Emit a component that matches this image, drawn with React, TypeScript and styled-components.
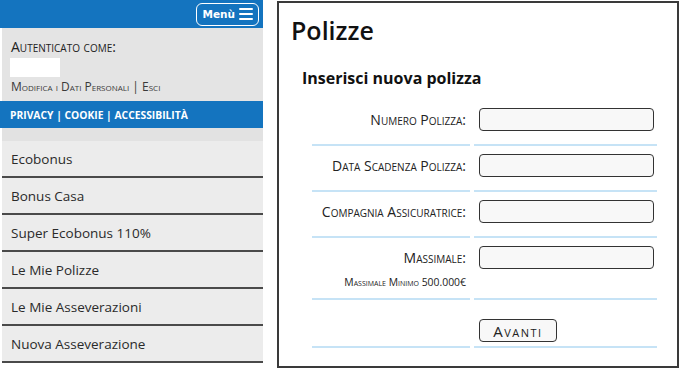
import { Fragment } from "react";
import styled, { createGlobalStyle } from "styled-components";

const GlobalStyle = createGlobalStyle`
  body {
    margin: 0;
    background: #ffffff;
    font-family: "Open Sans", "Liberation Sans", sans-serif;
    color: #222;
  }
`;

const blue = "#1474bf";
const rule = "#c6e3f6";

const Page = styled.div`
  display: flex;
  width: 680px;
  height: 375px;
  overflow: hidden;
`;

const Sidebar = styled.aside`
  width: 263px;
  flex: none;
  display: flex;
  flex-direction: column;
`;

const TopBar = styled.div`
  height: 28px;
  background: ${blue};
  display: flex;
  align-items: center;
  justify-content: flex-end;
  padding-right: 4px;
`;

const MenuButton = styled.button`
  display: flex;
  align-items: center;
  gap: 4px;
  height: 23px;
  padding: 0 5px 0 5px;
  border: 1.5px solid #fff;
  border-radius: 6px;
  background: transparent;
  color: #fff;
  font-family: "DejaVu Sans", sans-serif;
  font-weight: bold;
  font-size: 10.5px;
`;

const UserBox = styled.div`
  background: #e4e4e4;
  margin-left: 2px;
  padding: 10px 0 6px 9px;
`;

const SmallCaps = styled.div<{ $size: number }>`
  font-variant: small-caps;
  font-size: ${(p) => p.$size}px;
  line-height: ${(p) => p.$size + 4}px;
  color: #222;
`;

const NameBox = styled.div`
  width: 50px;
  height: 19px;
  background: #fff;
  margin: 2px 0 2px -1px;
`;

const LinkLine = styled(SmallCaps)`
  color: #3a3a3a;
`;

const PrivacyBar = styled.div`
  background: ${blue};
  height: 27px;
  display: flex;
  align-items: center;
  padding-left: 10px;
  color: #fff;
  font-weight: bold;
  font-size: 10.3px;
`;

const Spacer = styled.div`
  height: 13px;
  margin-left: 2px;
  background: #e2e2e2;
`;

const MenuList = styled.ul`
  list-style: none;
  margin: 0 0 0 2px;
  padding: 0;
`;

const MenuItem = styled.li`
  height: 35px;
  display: flex;
  align-items: center;
  padding-left: 9px;
  background: #ececec;
  border-bottom: 2px solid #4a4a4a;
  font-size: 13.5px;
  color: #2a2a2a;
`;

const Main = styled.main`
  margin: 1px 0 0 14px;
  width: 398px;
  height: 363px;
  border: 2px solid #3a3a3a;
  flex: none;
`;

const Title = styled.h1`
  margin: 12px 0 0 12px;
  font-size: 25px;
  font-weight: 600;
  color: #111;
  line-height: 30px;
`;

const SubTitle = styled.h2`
  margin: 22px 0 0 23px;
  font-size: 16px;
  font-weight: bold;
  color: #111;
  line-height: 22px;
`;

const FormGrid = styled.div`
  display: grid;
  grid-template-columns: 158px 183px;
  column-gap: 4px;
  align-items: start;
  margin: 11px 0 0 33px;
`;

const Cell = styled.div<{ $pad?: string }>`
  border-bottom: 2px solid ${rule};
  padding: ${(p) => p.$pad ?? "8px 0 13px"};
`;

const LabelCell = styled(Cell)`
  display: flex;
  flex-direction: column;
  align-items: flex-end;
  padding-right: 4px;
  align-self: stretch;
`;

const Label = styled.label`
  font-variant: small-caps;
  font-size: 14px;
  line-height: 23px;
  color: #222;
`;

const Note = styled.div`
  font-variant: small-caps;
  font-size: 10.4px;
  line-height: 12px;
  margin-top: 7px;
  color: #222;
`;

const Input = styled.input`
  display: block;
  box-sizing: border-box;
  width: 175px;
  height: 23px;
  margin-left: 5px;
  border: 1.5px solid #333;
  border-radius: 4px;
  background: #f8f8f8;
`;

const EmptyLine = styled.div`
  height: 10px;
  border-bottom: 2px solid ${rule};
`;

const Button = styled.button`
  display: block;
  margin-left: 5px;
  width: 78px;
  height: 23px;
  padding: 0;
  border: 1.5px solid #333;
  border-radius: 4px;
  background: #f8f8f8;
  font-variant: small-caps;
  font-family: "Open Sans", sans-serif;
  font-size: 15px;
  letter-spacing: 1.5px;
  color: #222;
`;

const Hamburger = () => (
  <svg width="14" height="12" viewBox="0 0 14 12">
    <rect x="0" y="0" width="14" height="2" rx="1" fill="#fff" />
    <rect x="0" y="5" width="14" height="2" rx="1" fill="#fff" />
    <rect x="0" y="10" width="14" height="2" rx="1" fill="#fff" />
  </svg>
);

const menu = [
  "Ecobonus",
  "Bonus Casa",
  "Super Ecobonus 110%",
  "Le Mie Polizze",
  "Le Mie Asseverazioni",
  "Nuova Asseverazione",
];

const fields = ["Numero Polizza:", "Data Scadenza Polizza:", "Compagnia Assicuratrice:"];

export default function App() {
  return (
    <Page>
      <GlobalStyle />
      <Sidebar>
        <TopBar>
          <MenuButton>
            Menù <Hamburger />
          </MenuButton>
        </TopBar>
        <UserBox>
          <SmallCaps $size={14}>Autenticato come:</SmallCaps>
          <NameBox />
          <LinkLine $size={12}>Modifica i Dati Personali | Esci</LinkLine>
        </UserBox>
        <PrivacyBar>PRIVACY | COOKIE | ACCESSIBILITÀ</PrivacyBar>
        <Spacer />
        <MenuList>
          {menu.map((m) => (
            <MenuItem key={m}>{m}</MenuItem>
          ))}
        </MenuList>
      </Sidebar>
      <Main>
        <Title>Polizze</Title>
        <SubTitle>Inserisci nuova polizza</SubTitle>
        <FormGrid>
          {fields.map((f) => (
            <Fragment key={f}>
              <LabelCell>
                <Label>{f}</Label>
              </LabelCell>
              <Cell>
                <Input />
              </Cell>
            </Fragment>
          ))}
          <LabelCell $pad="8px 4px 0 0">
            <Label>Massimale:</Label>
            <Note>Massimale Minimo 500.000€</Note>
          </LabelCell>
          <Cell $pad="8px 0 29px">
            <Input />
          </Cell>
          <LabelCell $pad="0">
            <EmptyLine />
          </LabelCell>
          <Cell $pad="19px 0 4px">
            <Button>Avanti</Button>
          </Cell>
        </FormGrid>
      </Main>
    </Page>
  );
}
